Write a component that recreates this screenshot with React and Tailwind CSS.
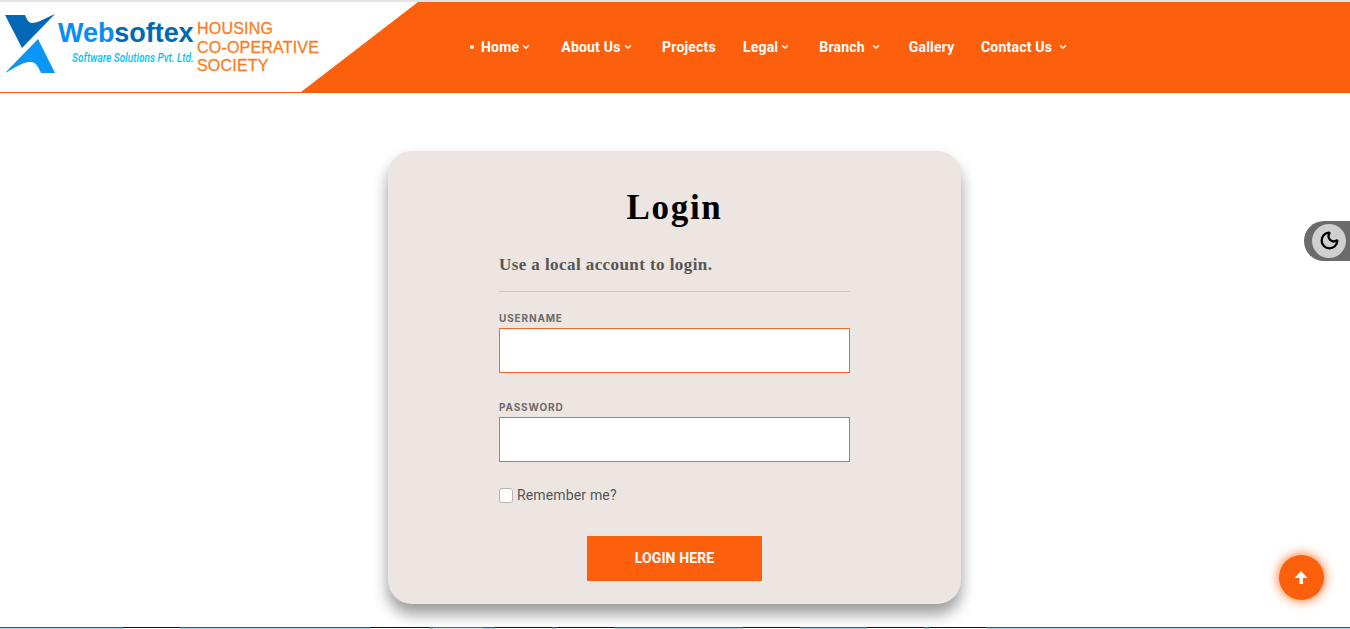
import { ChevronDown, Moon } from 'lucide-react';

const navItems = [
  { label: 'Home', chevron: true, dot: true, className: 'mr-[30px]' },
  { label: 'About Us', chevron: true, className: 'mr-[29.5px]' },
  { label: 'Projects', className: 'mr-[27px]' },
  { label: 'Legal', chevron: true, className: 'mr-[29px]' },
  { label: 'Branch', chevron: true, wide: true, className: 'mr-[28px]' },
  { label: 'Gallery', className: 'mr-[26.5px]' },
  { label: 'Contact Us', chevron: true, wide: true },
];

const taskbar = [
  [123, 'blue'], [57, 'dark'], [190, 'blue'], [59, 'dark'], [4, 'blue'], [50, 'pale'], [12, 'blue'],
  [57, 'dark'], [5, 'blue'], [57, 'dark'], [129, 'blue'], [57, 'dark'], [67, 'blue'], [57, 'dark'],
  [5, 'blue'], [57, 'dark'], [364, 'blue'],
];

function Logo() {
  return (
    <svg width="52" height="60" viewBox="0 0 52 60" className="shrink-0">
      <path d="M0 1 H20 C22 6 24 9 27 9 C33 9 41 4 50 0 L17 34 Z" fill="#0068b5" />
      <path d="M33 25 L50 59 H36 C32 50 30 48 25 48 C17 48 10 54 0 59 Z" fill="#0a96f5" />
    </svg>
  );
}

function Header() {
  return (
    <header className="flex h-[93px] shrink-0 border-t-2 border-[#e4e4e4] bg-[#fd600d]">
      <div className="flex h-[90px] w-[418px] shrink-0 items-start bg-white pl-[5px] pt-[12px] [clip-path:polygon(0_0,100%_0,72%_100%,0_100%)]">
        <Logo />
        <div className="ml-px mt-[4px] w-[136px] shrink-0 font-['Liberation_Sans',sans-serif]">
          <div className="text-[27px] font-bold leading-[30px] tracking-[-0.05px] text-[#0068b5]">
            <span className="text-[#0a8cf0]">Web</span>softex
          </div>
          <div className="ml-[14px] mt-[4px] origin-left scale-x-[0.84] whitespace-nowrap font-['Roboto',sans-serif] text-[12px] font-medium italic leading-[12px] text-[#0cc0f2]">
            Software Solutions Pvt. Ltd.
          </div>
        </div>
        <div className="ml-[3px] mt-[6px] font-['Liberation_Sans',sans-serif] text-[16px] leading-[18.5px] tracking-[0.2px] text-[#fb7d21] [-webkit-text-stroke:0.3px_#fb7d21]">
          <div>HOUSING</div>
          <div className="whitespace-nowrap">CO-OPERATIVE</div>
          <div>SOCIETY</div>
        </div>
      </div>
      <nav className="flex h-[90px] items-center pl-[52px] font-['Roboto',sans-serif] text-[14px] font-bold tracking-[0.2px] text-white">
        {navItems.map((item) => (
          <a key={item.label} className={`flex items-center whitespace-nowrap ${item.className || ''}`}>
            {item.dot && <span className="mr-[7px] h-[4px] w-[4px] rounded-full bg-white" />}
            {item.label}
            {item.chevron && (
              <ChevronDown size={10} strokeWidth={3.5} className={item.wide ? 'ml-[6px]' : 'ml-[2px]'} />
            )}
          </a>
        ))}
      </nav>
    </header>
  );
}

function LoginCard() {
  return (
    <section className="h-[453px] w-[573px] rounded-[24px] bg-[#ede5e2] px-[111px] pt-[34px] shadow-[0_10px_15px_rgba(0,0,0,0.4)]">
      <h1 className="text-center font-['Liberation_Serif',serif] text-[35px] font-bold leading-[46px] tracking-[1.7px] text-black">
        Login
      </h1>
      <h2 className="mt-[22px] font-['Liberation_Serif',serif] text-[17px] font-bold leading-[24px] tracking-[0.42px] text-[#555555]">
        Use a local account to login.
      </h2>
      <div className="mt-[14px] h-px bg-[#c9c5c3]" />
      <label className="mt-[20px] block font-['Inter',sans-serif] text-[10px] font-bold leading-[12px] tracking-[0.85px] text-[#6f6a6a]">
        USERNAME
      </label>
      <input className="mt-[4px] block h-[45px] w-full border border-[#f2682a] bg-white" />
      <label className="mt-[28px] block font-['Inter',sans-serif] text-[10px] font-bold leading-[12px] tracking-[0.85px] text-[#6f6a6a]">
        PASSWORD
      </label>
      <input className="mt-[4px] block h-[45px] w-full border border-[#f2682a] bg-white" />
      <div className="mt-[25px] flex h-[16px] items-center font-['Roboto',sans-serif] text-[14px] tracking-[0.15px] text-[#555555]">
        <span className="h-[15px] w-[14px] rounded-[3px] border border-[#b5b5b5] bg-white" />
        <span className="ml-[4px]">Remember me?</span>
      </div>
      <button className="mx-auto mt-[33px] block h-[45px] w-[175px] bg-[#fd600d] font-['Roboto',sans-serif] text-[14px] font-bold tracking-[0.1px] text-white">
        LOGIN HERE
      </button>
    </section>
  );
}

export default function App() {
  return (
    <div className="relative flex h-[629px] flex-col overflow-hidden bg-white">
      <Header />
      <main className="flex flex-1 justify-center pr-px pt-[58px]">
        <LoginCard />
      </main>

      {/* strip of the next window at the bottom edge */}
      <div className="flex h-[2px] shrink-0">
        {taskbar.map(([w, kind], i) => (
          <div
            key={i}
            style={{ width: w }}
            className={
              kind === 'dark'
                ? 'border-t border-[#111111] bg-white'
                : kind === 'pale'
                  ? 'border-t border-[#3a6a88] bg-[#dcecf6]'
                  : 'border-t border-[#2f5f7d] bg-[#a8d4ea]'
            }
          />
        ))}
      </div>

      {/* theme toggle */}
      <div className="absolute right-0 top-[221px] flex h-[40px] w-[46px] items-center rounded-l-full bg-[#6b6b6b] pl-[8px]">
        <div className="flex h-[34px] w-[34px] items-center justify-center rounded-full bg-[#cfcfcf]">
          <Moon size={21} strokeWidth={2.6} className="-mt-[2px] text-black" />
        </div>
      </div>

      {/* scroll to top */}
      <button className="absolute left-[1279px] top-[555px] flex h-[45px] w-[45px] items-center justify-center rounded-full bg-[#fd600d] text-white shadow-[0_0_12px_#fd600d]">
        <svg width="14" height="14" viewBox="0 0 14 14" fill="currentColor" className="-mt-[2px] -ml-[1px]">
          <path d="M7 1 L13.5 8 H9 V14 H5.5 V8 H0.5 Z" />
        </svg>
      </button>
    </div>
  );
}
